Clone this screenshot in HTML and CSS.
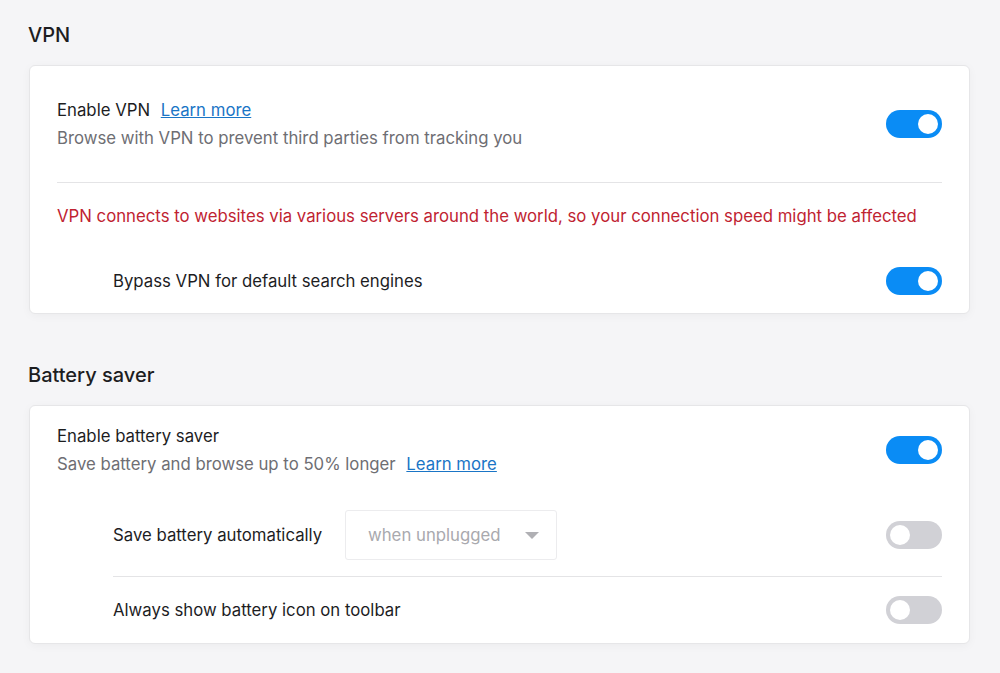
FILE: index.html
```html
<!DOCTYPE html>
<html lang="en">
<head>
    <meta charset="UTF-8">
    <title>Settings</title>
    <link rel="stylesheet" href="styles.css">
</head>
<body>

<main class="settings">
    <section class="group">
        <h2 class="group-title">VPN</h2>
        <div class="card">
            <div class="row row-main">
                <div class="row-text">
                    <div class="label">Enable VPN <a href="#" class="link">Learn more</a></div>
                    <div class="desc">Browse with VPN to prevent third parties from tracking you</div>
                </div>
                <span class="toggle on"></span>
            </div>
            <hr class="divider">
            <p class="warning">VPN connects to websites via various servers around the world, so your connection speed might be affected</p>
            <div class="row row-sub row-bypass">
                <div class="label">Bypass VPN for default search engines</div>
                <span class="toggle on"></span>
            </div>
        </div>
    </section>

    <section class="group">
        <h2 class="group-title">Battery saver</h2>
        <div class="card">
            <div class="row row-main row-battery">
                <div class="row-text">
                    <div class="label">Enable battery saver</div>
                    <div class="desc">Save battery and browse up to 50% longer <a href="#" class="link">Learn more</a></div>
                </div>
                <span class="toggle on"></span>
            </div>
            <div class="row row-sub row-auto">
                <div class="label">Save battery automatically</div>
                <div class="select">
                    <span>when unplugged</span>
                    <span class="caret"></span>
                </div>
                <span class="toggle"></span>
            </div>
            <hr class="divider divider-sub">
            <div class="row row-sub row-icon">
                <div class="label">Always show battery icon on toolbar</div>
                <span class="toggle"></span>
            </div>
        </div>
    </section>
</main>

</body>
</html>
```

FILE: styles.css
```css
body {
    margin: 0;
    background-color: #f5f5f7;
    font-family: Inter, "Noto Sans", sans-serif;
    color: #1d1d1f;
}

.settings {
    padding: 22px 30px 0 28px;
}

.group {
    margin-bottom: 48px;
}

.group-title {
    margin: 0 0 17px 0;
    font-size: 20px;
    font-weight: 500;
    line-height: 26px;
}

.card {
    margin-left: 1px;
    background-color: white;
    border: 1px solid #e6e6e8;
    border-radius: 6px;
    box-shadow: 0 2px 10px rgba(0, 0, 0, 0.04);
    padding: 0 27px 0 27px;
}

.row {
    display: flex;
    align-items: center;
}

.row-text {
    flex: 1;
}

.label {
    font-size: 16.75px;
    line-height: 28px;
}

.desc {
    font-size: 16.75px;
    line-height: 28px;
    color: #6e6e73;
}

.link {
    color: #1a75c6;
    margin-left: 6px;
}

.row-main {
    padding: 30px 0 30px 0;
}

.row-battery {
    padding: 16px 0 0 0;
}

.row-sub {
    margin-left: 56px;
}

.row-sub .label {
    flex: 1;
}

.row-bypass {
    padding: 37px 0 18px 0;
}

.row-auto {
    padding: 32px 0 16px 0;
}

.row-auto .label {
    flex: none;
    width: 232px;
}

.row-auto .select {
    margin-right: auto;
}

.row-icon {
    padding: 19px 0 19px 0;
}

.divider {
    margin: 0;
    border: none;
    border-top: 1px solid #e4e4e6;
}

.divider-sub {
    margin-left: 56px;
}

.warning {
    margin: 19px 0 0 0;
    font-size: 16.75px;
    line-height: 28px;
    color: #bf2331;
}

.select {
    display: flex;
    align-items: center;
    justify-content: space-between;
    box-sizing: border-box;
    width: 212px;
    height: 50px;
    padding: 0 17px 0 22px;
    border: 1px solid #ececee;
    border-radius: 3px;
    font-size: 16.75px;
    color: #a9a9ae;
}

.caret {
    width: 0;
    height: 0;
    border-left: 7px solid transparent;
    border-right: 7px solid transparent;
    border-top: 7px solid #b0b0b4;
}

.toggle {
    position: relative;
    flex: none;
    width: 56px;
    height: 28px;
    border-radius: 14px;
    background-color: #d1d1d6;
}

.toggle::after {
    content: "";
    position: absolute;
    top: 4px;
    left: 4px;
    width: 20px;
    height: 20px;
    border-radius: 50%;
    background-color: white;
}

.toggle.on {
    background-color: #0a8cf5;
}

.toggle.on::after {
    left: 32px;
}
```
